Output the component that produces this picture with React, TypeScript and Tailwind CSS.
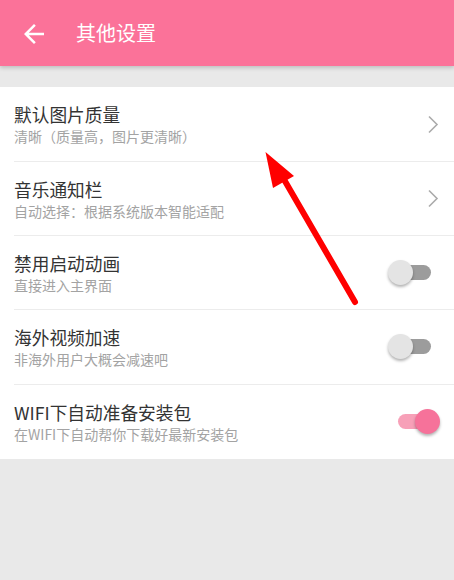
function Chevron() {
  return (
    <svg width="12" height="19" viewBox="0 0 12 19" className="shrink-0">
      <path d="M2 1.5 L10 9.5 L2 17.5" fill="none" stroke="#ababab" strokeWidth="1.6" />
    </svg>
  );
}

function Toggle({ on }: { on: boolean }) {
  return (
    <div className="relative w-[53px] h-[26px] shrink-0">
      <div
        className={
          on
            ? "absolute left-[10px] top-[5px] w-[34px] h-[15px] rounded-full bg-[#f7a0b8]"
            : "absolute left-[8px] top-[5px] w-[35px] h-[15px] rounded-full bg-[#9c9c9c]"
        }
      />
      <div
        className={
          on
            ? "absolute right-[1px] top-0 w-[25px] h-[25px] rounded-full bg-[#f6729a] shadow-[0_2px_3px_rgba(0,0,0,0.3)]"
            : "absolute left-0 top-0 w-[25px] h-[25px] rounded-full bg-[#e4e4e4] shadow-[0_2px_3px_rgba(0,0,0,0.3)]"
        }
      />
    </div>
  );
}

type Row = { title: string; sub: string; kind: "link" | "off" | "on"; h: string };

const rows: Row[] = [
  { title: "默认图片质量", sub: "清晰（质量高，图片更清晰）", kind: "link", h: "h-[75px]" },
  { title: "音乐通知栏", sub: "自动选择：根据系统版本智能适配", kind: "link", h: "h-[74px]" },
  { title: "禁用启动动画", sub: "直接进入主界面", kind: "off", h: "h-[74px]" },
  { title: "海外视频加速", sub: "非海外用户大概会减速吧", kind: "off", h: "h-[75px]" },
  { title: "WIFI下自动准备安装包", sub: "在WIFI下自动帮你下载好最新安装包", kind: "on", h: "h-[74px]" },
];

export default function App() {
  return (
    <div
      className="relative w-[454px] h-[580px] bg-[#e9e9e9] overflow-hidden"
      style={{ fontFamily: '"Noto Sans CJK SC", "Noto Sans", sans-serif' }}
    >
      <header className="relative z-10 h-[66px] bg-[#fb7299] flex items-center shadow-[0_2px_4px_rgba(0,0,0,0.18)]">
        <svg width="30" height="30" viewBox="0 0 24 24" className="ml-[19px] mt-[2px]">
          <path fill="#fff" d="M20 11H7.83l5.59-5.59L12 4l-8 8 8 8 1.41-1.41L7.83 13H20v-2z" />
        </svg>
        <h1 className="ml-[27px] text-[20px] text-white leading-none">其他设置</h1>
      </header>

      <div className="mt-[21px] bg-white">
        {rows.map((r, i) => (
          <div key={r.title} className="pl-[14px]">
            <div
              className={
                r.h +
                " flex items-center pr-[14px] " +
                (i < rows.length - 1 ? "border-b border-[#ececec]" : "")
              }
            >
              <div className="flex-1 min-w-0">
                <div className="text-[17.7px] leading-[22px] text-[#333]">{r.title}</div>
                <div className="mt-[3px] text-[14px] leading-[17px] text-[#a3a3a3] whitespace-nowrap">
                  {r.sub}
                </div>
              </div>
              {r.kind === "link" ? (
                <div className="pr-[1px]">
                  <Chevron />
                </div>
              ) : (
                <div className="-mr-[1px]">
                  <Toggle on={r.kind === "on"} />
                </div>
              )}
            </div>
          </div>
        ))}
      </div>

      {/* annotation arrow */}
      <svg className="absolute left-0 top-0 pointer-events-none" width="454" height="580">
        <line x1="355" y1="302" x2="282" y2="176" stroke="#ff0000" strokeWidth="6" strokeLinecap="round" />
        <polygon points="265.5,152 273,188 294,176" fill="#ff0000" />
      </svg>
    </div>
  );
}
